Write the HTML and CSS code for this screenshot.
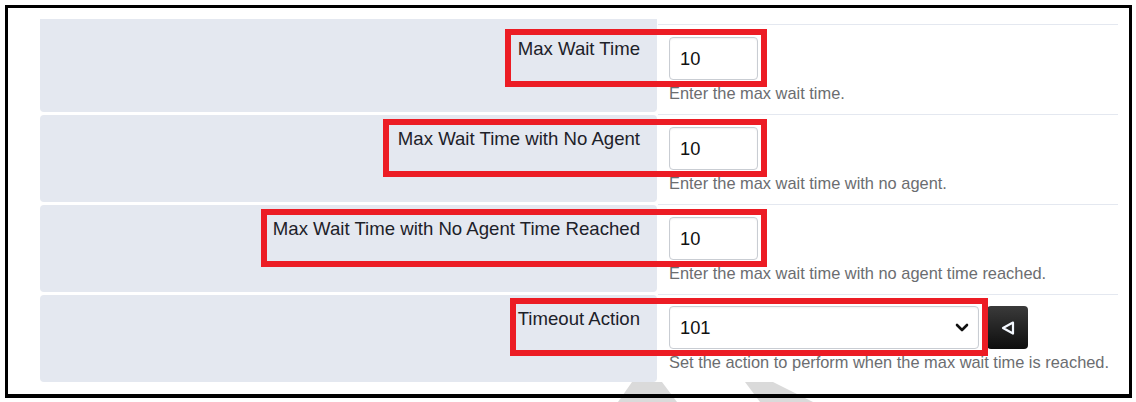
FILE: index.html
```html
<!DOCTYPE html>
<html>
<head>
<meta charset="utf-8">
<link rel="stylesheet" href="styles.css">
</head>
<body>
<div class="frame">
  <div class="form">
    <div class="row row-partial">
      <div class="label-cell"></div>
      <div class="value-cell"></div>
    </div>
    <div class="row">
      <div class="label-cell">Max Wait Time</div>
      <div class="value-cell">
        <div class="input">10</div>
        <div class="help">Enter the max wait time.</div>
      </div>
    </div>
    <div class="row">
      <div class="label-cell">Max Wait Time with No Agent</div>
      <div class="value-cell">
        <div class="input">10</div>
        <div class="help">Enter the max wait time with no agent.</div>
      </div>
    </div>
    <div class="row">
      <div class="label-cell">Max Wait Time with No Agent Time Reached</div>
      <div class="value-cell">
        <div class="input">10</div>
        <div class="help">Enter the max wait time with no agent time reached.</div>
      </div>
    </div>
    <div class="row">
      <div class="label-cell">Timeout Action</div>
      <div class="value-cell">
        <div class="select-line">
          <div class="select">
            <span>101</span>
            <svg class="chevron" width="14" height="10" viewBox="0 0 14 10"><path d="M2 2 L7 7 L12 2" fill="none" stroke="#111" stroke-width="2.6" stroke-linecap="round" stroke-linejoin="round"/></svg>
          </div>
          <div class="btn">
            <svg width="16" height="16" viewBox="0 0 16 16"><path d="M13 2.5 L3 8 L13 13.5 Z" fill="none" stroke="#f4f8ff" stroke-width="2.2" stroke-linejoin="round"/></svg>
          </div>
        </div>
        <div class="help">Set the action to perform when the max wait time is reached.</div>
      </div>
    </div>
  </div>
</div>
<div class="mark mark-1"></div>
<div class="mark mark-2"></div>
<div class="red red-1"></div>
<div class="red red-2"></div>
<div class="red red-3"></div>
<div class="red red-4"></div>
</body>
</html>
```
FILE: styles.css
```css
html, body {
  margin: 0;
  padding: 0;
  background: #ffffff;
}
body {
  position: relative;
  width: 1136px;
  height: 402px;
  overflow: hidden;
  font-family: "Liberation Sans", Arial, sans-serif;
}
.frame {
  position: relative;
  z-index: 1;
  box-sizing: border-box;
  margin: 5px 0 0 5px;
  width: 1127px;
  height: 393px;
  border: 3px solid #000;
  border-bottom-width: 4px;
  background: transparent;
}
.form {
  margin: 11px 0 0 32px;
  width: 1078px;
  display: flex;
  flex-direction: column;
  gap: 2px;
}
.row {
  display: grid;
  grid-template-columns: 617px 1fr;
  height: 88px;
}
.row-partial {
  height: 3px;
}
.row-partial .label-cell {
  margin-top: 0;
  height: 3px;
  border-radius: 0 0 3px 3px;
}
.row-partial .value-cell {
  border-top: none;
}
.label-cell {
  margin-top: 1px;
  height: 87px;
  box-sizing: border-box;
  background: #e4e8f0;
  border-radius: 4px;
  padding: 14px 17px 0 0;
  text-align: right;
  font-size: 18.6px;
  line-height: 20px;
  color: #1d2129;
}
.value-cell {
  margin-left: 1px;
  border-top: 1px solid #e4e8f0;
  padding: 12px 0 0 11px;
}
.input {
  box-sizing: border-box;
  width: 89px;
  height: 43px;
  border: 1px solid #c9cdd3;
  border-radius: 4px;
  box-shadow: inset 0 1px 2px rgba(0,0,0,0.06);
  background: #fff;
  padding-left: 10px;
  font-size: 18.3px;
  line-height: 41px;
  color: #111;
}
.help {
  margin-top: 4px;
  font-size: 16.4px;
  line-height: 18px;
  color: #6b6d70;
  white-space: nowrap;
}
.select-line {
  display: flex;
  gap: 8px;
  margin-top: -1px;
}
.select {
  box-sizing: border-box;
  width: 310px;
  height: 43px;
  border: 1px solid #c9cdd3;
  border-radius: 4px;
  box-shadow: inset 0 1px 2px rgba(0,0,0,0.05);
  background: #fff;
  padding: 0 9px 0 10px;
  display: flex;
  align-items: center;
  justify-content: space-between;
  font-size: 18.3px;
  color: #111;
}
.chevron {
  display: block;
}
.btn {
  width: 41px;
  height: 43px;
  border-radius: 4px;
  background: linear-gradient(#3a3a3a, #0e0e0e);
  display: flex;
  align-items: center;
  justify-content: center;
}
.btn svg {
  display: block;
}
.red {
  position: absolute;
  z-index: 2;
  box-sizing: border-box;
  border: 6px solid #ec1c24;
  height: 58px;
}
.red-1 { left: 505px; top: 29px; width: 262px; }
.red-2 { left: 383px; top: 119px; width: 384px; }
.red-3 { left: 261px; top: 209px; width: 506px; }
.red-4 { left: 510px; top: 298px; width: 478px; }
.mark {
  position: absolute;
  z-index: 0;
  top: 382px;
  height: 20px;
  background: #dadada;
}
.mark-1 {
  left: 618px;
  width: 59px;
  clip-path: polygon(14px 0, 44px 0, 59px 100%, 0 100%);
}
.mark-2 {
  left: 745px;
  width: 68px;
  clip-path: polygon(0 0, 28px 0, 68px 100%, 15px 100%);
}
```
